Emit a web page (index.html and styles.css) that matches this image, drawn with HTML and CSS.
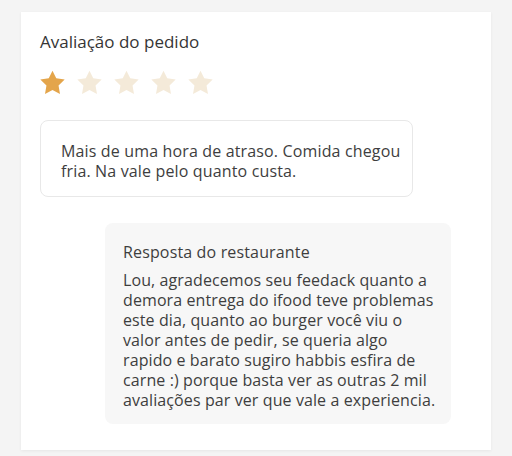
FILE: index.html
```html
<!DOCTYPE html>
<html lang="pt-BR">
<head>
<meta charset="utf-8">
<title>Avaliação do pedido</title>
<link rel="stylesheet" href="styles.css">
</head>
<body>
<section class="card">
  <h2 class="title">Avaliação do pedido</h2>
  <div class="stars" aria-label="1 de 5 estrelas">
    <svg class="star on" viewBox="0 0 24 24"><path d="M12 .6l3.6 7.4 8.1 1.2-5.9 5.7 1.4 8.1L12 19.2l-7.2 3.8 1.4-8.1L.3 9.2l8.1-1.2z"/></svg>
    <svg class="star" viewBox="0 0 24 24"><path d="M12 .6l3.6 7.4 8.1 1.2-5.9 5.7 1.4 8.1L12 19.2l-7.2 3.8 1.4-8.1L.3 9.2l8.1-1.2z"/></svg>
    <svg class="star" viewBox="0 0 24 24"><path d="M12 .6l3.6 7.4 8.1 1.2-5.9 5.7 1.4 8.1L12 19.2l-7.2 3.8 1.4-8.1L.3 9.2l8.1-1.2z"/></svg>
    <svg class="star" viewBox="0 0 24 24"><path d="M12 .6l3.6 7.4 8.1 1.2-5.9 5.7 1.4 8.1L12 19.2l-7.2 3.8 1.4-8.1L.3 9.2l8.1-1.2z"/></svg>
    <svg class="star" viewBox="0 0 24 24"><path d="M12 .6l3.6 7.4 8.1 1.2-5.9 5.7 1.4 8.1L12 19.2l-7.2 3.8 1.4-8.1L.3 9.2l8.1-1.2z"/></svg>
  </div>
  <div class="comment">Mais de uma hora de atraso. Comida chegou fria. Na vale pelo quanto custa.</div>
  <div class="reply">
    <h3 class="reply-title">Resposta do restaurante</h3>
    <p class="reply-text">Lou, agradecemos seu feedack quanto a<br>demora entrega do ifood teve problemas<br>este dia, quanto ao burger você viu o<br>valor antes de pedir, se queria algo<br>rapido e barato sugiro habbis esfira de<br>carne :) porque basta ver as outras 2 mil<br>avaliações par ver que vale a experiencia.</p>
  </div>
</section>
</body>
</html>
```

FILE: styles.css
```css
* { box-sizing: border-box; }
html, body { margin: 0; padding: 0; }
body {
  background: #f4f4f4;
  font-family: "Open Sans", "Noto Sans", sans-serif;
  color: #3e3e3e;
  width: 512px;
  height: 456px;
  overflow: hidden;
}
.card {
  margin: 12px 21px 0 21px;
  width: 470px;
  height: 438px;
  background: #ffffff;
  box-shadow: 0 1px 3px rgba(0,0,0,0.06);
  padding: 20px 19px 0 19px;
  display: flex;
  flex-direction: column;
  align-items: flex-start;
}
.title {
  margin: 0;
  font-size: 17px;
  line-height: 20px;
  font-weight: 500;
  color: #363535;
}
.stars {
  margin-top: 18px;
  display: flex;
  gap: 12px;
}
.star {
  width: 25px;
  height: 25px;
  fill: #f4ead9;
}
.star.on { fill: #e4a54b; }
.comment {
  margin-top: 25px;
  width: 373px;
  border: 1px solid #e8e8e8;
  border-radius: 8px;
  padding: 20px 8px 15px 20px;
  font-size: 16px;
  line-height: 20px;
  letter-spacing: 0.15px;
  color: #3e3e3e;
}
.reply {
  margin-top: 26px;
  margin-left: 65px;
  width: 346px;
  background: #f7f7f7;
  border-radius: 8px;
  padding: 17px 4px 14px 18px;
}
.reply-title {
  margin: 0;
  font-size: 16px;
  line-height: 24px;
  font-weight: 400;
  letter-spacing: 0.15px;
  color: #3e3e3e;
}
.reply-text {
  margin: 6px 0 0 0;
  font-size: 16px;
  line-height: 20px;
  letter-spacing: 0.1px;
  white-space: nowrap;
  color: #3e3e3e;
}
```
